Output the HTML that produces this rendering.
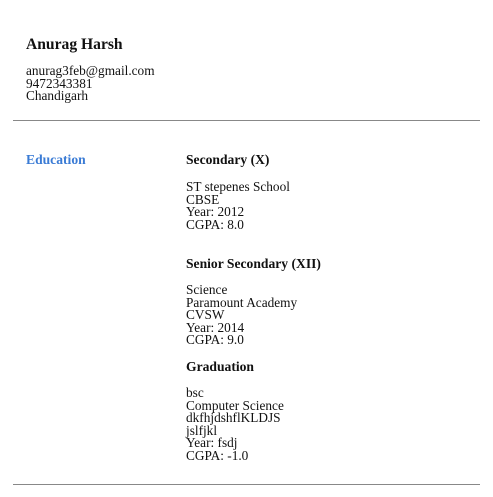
<!DOCTYPE html>
<html><head><style>
body{margin:0;background:#fff;width:493px;height:497px;position:relative;font-family:"Liberation Serif",serif;color:#111;overflow:hidden}
div{position:absolute;white-space:nowrap}
.t{font-size:13.3px;line-height:12.5px}
.b{font-weight:bold;font-size:13.6px}
.hr{height:1px;background:#888;left:13px;width:467px}
</style></head><body>
<div style="left:26px;top:36px;font-size:15.6px;font-weight:bold">Anurag Harsh</div>
<div class="t" style="left:26px;top:65px">anurag3feb@gmail.com<br>9472343381<br>Chandigarh</div>
<div class="hr" style="top:120px"></div>
<div class="b" style="left:26px;top:152px;color:#3a7bd5">Education</div>
<div class="b" style="left:186px;top:152px">Secondary (X)</div>
<div class="t" style="left:186px;top:181px">ST stepenes School<br>CBSE<br>Year: 2012<br>CGPA: 8.0</div>
<div class="b" style="left:186px;top:256px">Senior Secondary (XII)</div>
<div class="t" style="left:186px;top:284px">Science<br>Paramount Academy<br>CVSW<br>Year: 2014<br>CGPA: 9.0</div>
<div class="b" style="left:186px;top:359px">Graduation</div>
<div class="t" style="left:186px;top:387px">bsc<br>Computer Science<br>dkfhjdshflKLDJS<br>jslfjkl<br>Year: fsdj<br>CGPA: -1.0</div>
<div class="hr" style="top:484px"></div>
</body></html>
